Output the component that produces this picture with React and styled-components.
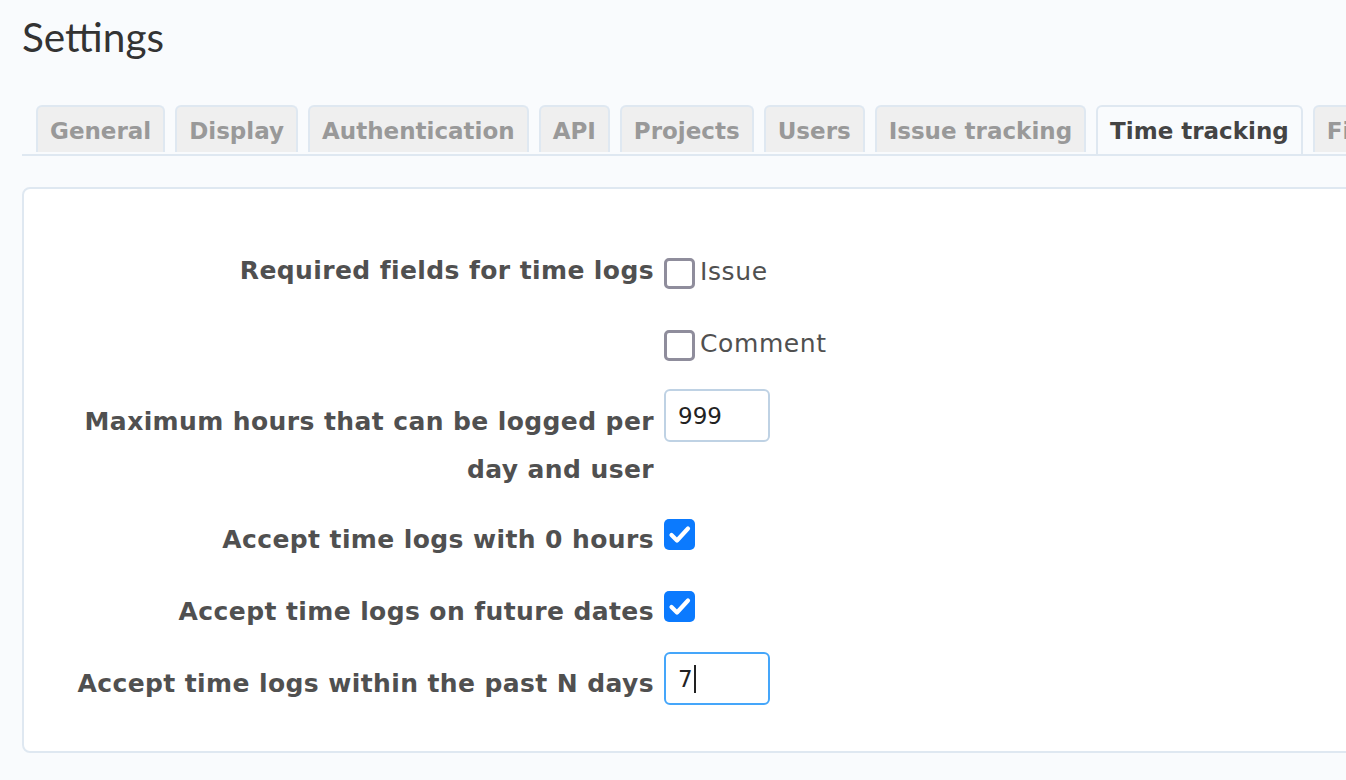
import React from 'react';
import styled, { createGlobalStyle } from 'styled-components';

const GlobalStyle = createGlobalStyle`
  html, body {
    margin: 0;
    padding: 0;
    background: #f9fbfd;
    overflow: hidden;
  }
  body {
    font-family: 'DejaVu Sans', Verdana, sans-serif;
    color: #484848;
  }
`;

const Page = styled.div`
  width: 1346px;
  height: 780px;
  padding: 14px 0 0 22px;
  box-sizing: border-box;
  overflow: hidden;
`;

const Title = styled.h2`
  margin: 0;
  font-family: 'Lato', 'Open Sans', sans-serif;
  font-weight: 400;
  font-size: 40.5px;
  line-height: 46px;
  color: #333;
`;

const TabBar = styled.ul`
  display: flex;
  gap: 10px;
  margin: 45px 0 0;
  padding: 0 0 0 14px;
  list-style: none;
  border-bottom: 2px solid #dfe8f1;
  height: 49px;
  white-space: nowrap;
`;

const Tab = styled.li`
  flex: none;
  height: ${p => (p.$active ? '49px' : '47px')};
  margin-bottom: ${p => (p.$active ? '-2px' : '0')};
  padding: 0 12px;
  box-sizing: border-box;
  border: 2px solid #dfe8f1;
  border-bottom: ${p => (p.$active ? 'none' : '0')};
  border-radius: 6px 6px 0 0;
  background: ${p => (p.$active ? '#f9fbfd' : '#efefef')};
  color: ${p => (p.$active ? '#444' : '#999')};
  font-weight: 700;
  font-size: 23px;
  line-height: 48px;
`;

const Box = styled.div`
  margin-top: 31px;
  width: 1340px;
  height: 566px;
  box-sizing: border-box;
  background: #fff;
  border: 2px solid #dfe8f1;
  border-radius: 8px;
  padding: 58px 0 0 40px;
`;

const Rows = styled.div`
  display: flex;
  flex-direction: column;
`;

const Row = styled.div`
  display: flex;
  align-items: flex-start;
  gap: 10px;
  margin-top: ${p => p.$mt || 0}px;
`;

const Label = styled.label`
  width: 590px;
  flex: none;
  text-align: right;
  font-weight: 700;
  font-size: 25px;
  letter-spacing: 0.4px;
  line-height: 48px;
  color: #505050;
  padding-top: ${p => p.$offset || 0}px;
`;

const Field = styled.div`
  display: flex;
  flex-direction: column;
  gap: 24px;
  padding-top: ${p => p.$offset || 0}px;
`;

const CheckItem = styled.label`
  display: flex;
  align-items: center;
  height: 48px;
  gap: 5px;
  font-size: 25px;
  letter-spacing: 0.6px;
  color: #505050;
`;

const CheckBox = styled.span`
  display: inline-flex;
  align-items: center;
  justify-content: center;
  flex: none;
  width: 31px;
  height: 31px;
  box-sizing: border-box;
  border-radius: 5px;
  margin-top: ${p => p.$drop || 0}px;
  border: ${p => (p.$checked ? 'none' : '3px solid #8f8d9c')};
  background: ${p => (p.$checked ? '#0b7afe' : '#fff')};
`;

const TextInput = styled.div`
  width: 106px;
  height: 53px;
  box-sizing: border-box;
  border: 2px solid ${p => (p.$focused ? '#45a6fa' : '#bfd2e4')};
  border-radius: 6px;
  padding: 0 12px;
  display: flex;
  align-items: center;
  font-size: 23px;
  color: #222;
  background: #fff;
`;

const Caret = styled.span`
  display: inline-block;
  width: 2px;
  height: 28px;
  background: #222;
  margin-left: 1px;
`;

const Check = ({ checked, drop }) => (
  <CheckBox $checked={checked} $drop={drop}>
    {checked && (
      <svg width="31" height="31" viewBox="0 0 31 31">
        <path d="M7.5 16 L13 21.5 L24 9.5" fill="none" stroke="#fff" strokeWidth="4.2" strokeLinecap="round" strokeLinejoin="round" />
      </svg>
    )}
  </CheckBox>
);

const tabs = ['General', 'Display', 'Authentication', 'API', 'Projects', 'Users', 'Issue tracking', 'Time tracking', 'Files'];

export default function App() {
  return (
    <Page>
      <GlobalStyle />
      <Title>Settings</Title>
      <TabBar>
        {tabs.map(t => (
          <Tab key={t} $active={t === 'Time tracking'}>{t}</Tab>
        ))}
      </TabBar>
      <Box>
        <Rows>
          <Row>
            <Label>Required fields for time logs</Label>
            <Field>
              <CheckItem><Check drop={5} />Issue</CheckItem>
              <CheckItem><Check drop={5} />Comment</CheckItem>
            </Field>
          </Row>
          <Row $mt={22}>
            <Label $offset={9}>Maximum hours that can be logged per day and user</Label>
            <Field>
              <TextInput>999</TextInput>
            </Field>
          </Row>
          <Row $mt={22}>
            <Label>Accept time logs with 0 hours</Label>
            <Field $offset={3}><Check checked /></Field>
          </Row>
          <Row $mt={24}>
            <Label>Accept time logs on future dates</Label>
            <Field $offset={3}><Check checked /></Field>
          </Row>
          <Row $mt={16}>
            <Label $offset={8}>Accept time logs within the past N days</Label>
            <Field>
              <TextInput $focused>7<Caret /></TextInput>
            </Field>
          </Row>
        </Rows>
      </Box>
    </Page>
  );
}
